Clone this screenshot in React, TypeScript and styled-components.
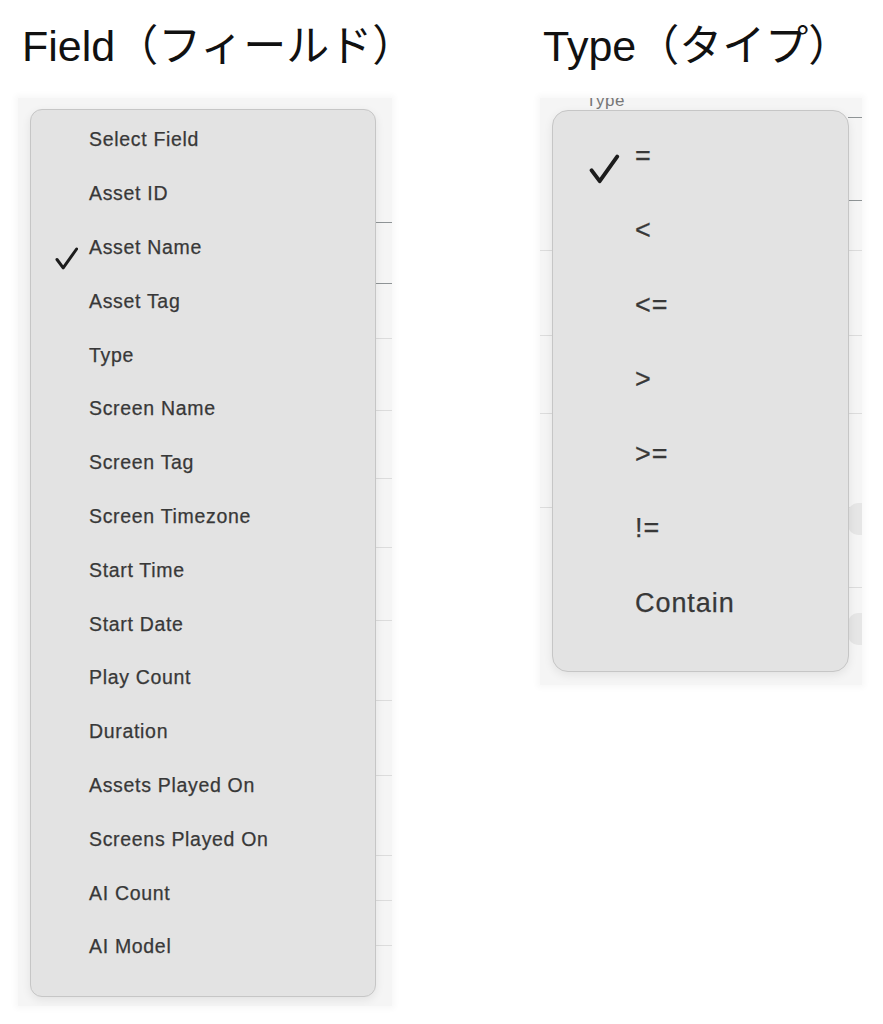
import React from "react";
import styled, { createGlobalStyle } from "styled-components";

const Global = createGlobalStyle`
  html, body { margin: 0; padding: 0; background: #ffffff; }
  body { font-family: "Liberation Sans", "Noto Sans CJK JP", Arial, sans-serif; }
`;

const Page = styled.div`
  display: flex;
  align-items: flex-start;
  gap: 148px;
  padding: 22px 0 0 18px;
  width: 883px;
  height: 1024px;
  box-sizing: border-box;
  overflow: hidden;
`;

const Column = styled.section<{ $width: number }>`
  display: flex;
  flex-direction: column;
  width: ${(p) => p.$width}px;
`;

const Heading = styled.h2<{ $indent: number }>`
  margin: 0 0 28px;
  padding-left: ${(p) => p.$indent}px;
  height: 48px;
  font-family: "Liberation Sans", "Noto Sans CJK JP", sans-serif;
  font-weight: 400;
  font-size: 43px;
  line-height: 48px;
  color: #111111;
  white-space: nowrap;
`;

const Backdrop = styled.div<{ $pad: string }>`
  position: relative;
  padding: ${(p) => p.$pad};
  background: #f5f5f5;
  box-shadow: 0 0 6px 3px #f8f8f8;
  overflow: hidden;
`;

const Rule = styled.div<{ $top: number; $side: "left" | "right"; $w: number; $dark?: boolean }>`
  position: absolute;
  top: ${(p) => p.$top}px;
  ${(p) => p.$side}: 0;
  width: ${(p) => p.$w}px;
  height: 1px;
  background: ${(p) => (p.$dark ? "#8f9496" : "#dcdcdc")};
`;

const Ghost = styled.div`
  position: absolute;
  top: -6px;
  left: 46px;
  font-size: 17px;
  line-height: 18px;
  color: #777;
  letter-spacing: 0.5px;
`;

const Blob = styled.div<{ $top: number }>`
  position: absolute;
  right: 0;
  top: ${(p) => p.$top}px;
  width: 14px;
  height: 32px;
  border-radius: 10px 0 0 10px;
  background: #e6e6e6;
`;

const Menu = styled.ul<{ $radius: number; $pad: string }>`
  position: relative;
  z-index: 1;
  list-style: none;
  margin: 0;
  padding: ${(p) => p.$pad};
  background: #e3e3e3;
  border: 1px solid #c6c6c6;
  border-radius: ${(p) => p.$radius}px;
  box-shadow: 0 3px 10px rgba(0, 0, 0, 0.08);
`;

const Item = styled.li<{ $h: number; $gutter: number; $size: number }>`
  display: grid;
  grid-template-columns: ${(p) => p.$gutter}px 1fr;
  align-items: center;
  height: ${(p) => p.$h}px;
  font-family: "Liberation Sans", Arial, sans-serif;
  font-size: ${(p) => p.$size}px;
  letter-spacing: ${(p) => p.$size * 0.035}px;
  color: #383838;
  -webkit-text-stroke: 0.25px #383838;
`;

const CheckSlot = styled.span<{ $left: number; $drop: number }>`
  display: flex;
  padding-left: ${(p) => p.$left}px;
  transform: translateY(${(p) => p.$drop}px);
`;

const Label = styled.span`
  white-space: nowrap;
`;

const Check = ({ w, h }: { w: number; h: number }) => (
  <svg width={w} height={h} viewBox="0 0 23 23" fill="none">
    <path
      d="M2 12.5 L8.2 20.8 L21.6 2"
      stroke="#1c1c1c"
      strokeWidth={3}
      strokeLinecap="round"
      strokeLinejoin="round"
    />
  </svg>
);

const fieldItems = [
  "Select Field",
  "Asset ID",
  "Asset Name",
  "Asset Tag",
  "Type",
  "Screen Name",
  "Screen Tag",
  "Screen Timezone",
  "Start Time",
  "Start Date",
  "Play Count",
  "Duration",
  "Assets Played On",
  "Screens Played On",
  "AI Count",
  "AI Model",
];

const typeItems = ["=", "<", "<=", ">", ">=", "!=", "Contain"];

const fieldRules = [
  { top: 124, dark: true },
  { top: 185, dark: true },
  { top: 240 },
  { top: 312 },
  { top: 380 },
  { top: 449 },
  { top: 522 },
  { top: 602 },
  { top: 677 },
  { top: 757 },
  { top: 802 },
  { top: 847 },
];

const typeRightRules = [
  { top: 19, dark: true },
  { top: 102, dark: true },
  { top: 152 },
  { top: 237 },
  { top: 315 },
  { top: 409 },
  { top: 489 },
];

const typeLeftRules = [152, 237, 315, 409];

export default function App() {
  return (
    <>
      <Global />
      <Page>
        <Column $width={374}>
          <Heading $indent={4}>Field（フィールド）</Heading>
          <Backdrop $pad="11px 16px 9px 12px">
            {fieldRules.map((r, i) => (
              <Rule key={i} $top={r.top} $side="right" $w={16} $dark={r.dark} />
            ))}
            <Menu $radius={12} $pad="3px 0 22px">
              {fieldItems.map((t) => (
                <Item key={t} $h={53.8} $gutter={58} $size={19.5}>
                  <CheckSlot $left={24} $drop={11}>
                    {t === "Asset Name" ? <Check w={23} h={23} /> : null}
                  </CheckSlot>
                  <Label>{t}</Label>
                </Item>
              ))}
            </Menu>
          </Backdrop>
        </Column>
        <Column $width={322}>
          <Heading $indent={3}>Type（タイプ）</Heading>
          <Backdrop $pad="12px 13px 13px 12px">
            <Ghost>Type</Ghost>
            {typeRightRules.map((r, i) => (
              <Rule key={"r" + i} $top={r.top} $side="right" $w={14} $dark={r.dark} />
            ))}
            {typeLeftRules.map((t, i) => (
              <Rule key={"l" + i} $top={t} $side="left" $w={12} />
            ))}
            <Blob $top={405} />
            <Blob $top={515} />
            <Menu $radius={16} $pad="8px 0 30px">
              {typeItems.map((t) => (
                <Item key={t} $h={74.5} $gutter={82} $size={27}>
                  <CheckSlot $left={35} $drop={13}>
                    {t === "=" ? <Check w={32} h={30} /> : null}
                  </CheckSlot>
                  <Label>{t}</Label>
                </Item>
              ))}
            </Menu>
          </Backdrop>
        </Column>
      </Page>
    </>
  );
}
